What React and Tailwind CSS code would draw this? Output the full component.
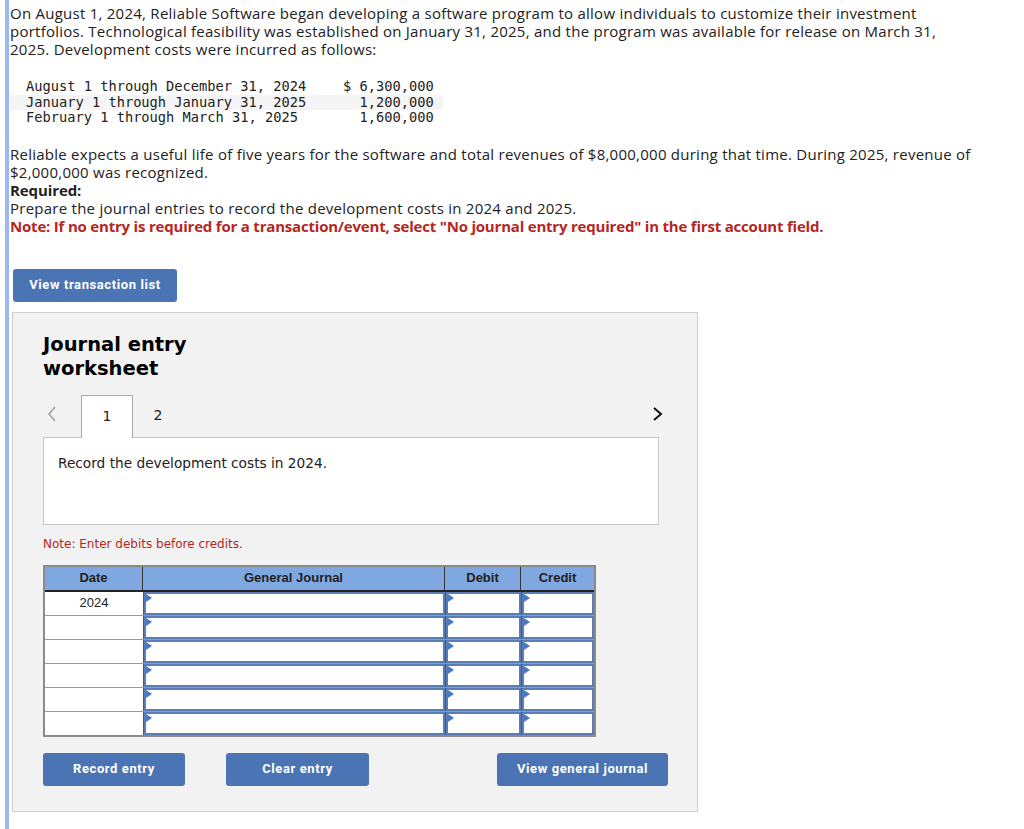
import React from 'react';

const body = { fontFamily: '"Open Sans", Lato, sans-serif' };
const mono = { fontFamily: '"DejaVu Sans Mono", monospace' };
const verdana = { fontFamily: '"DejaVu Sans", Verdana, sans-serif' };
const arial = { fontFamily: '"Liberation Sans", Arial, sans-serif' };

const costs = [
  ['August 1 through December 31, 2024', '$ 6,300,000'],
  ['January 1 through January 31, 2025', '  1,200,000'],
  ['February 1 through March 31, 2025', '  1,600,000'],
];

const InputCell = ({ w }) => (
  <div className={`relative ${w} h-[23px] border-l border-[#555] bg-white`}>
    <div className="relative h-full border-2 border-[#5a7db8] bg-white">
      <span className="absolute left-0 top-0 h-0 w-0 border-y-[4px] border-l-[6px] border-y-transparent border-l-[#4a78c2]" />
    </div>
  </div>
);

const BlueButton = ({ children, className = '' }) => (
  <button
    className={`h-[33px] rounded-[3px] bg-[#4a74b4] text-[13px] font-bold tracking-[0.6px] text-white ${className}`}
    style={{ fontFamily: 'Roboto, "Liberation Sans", sans-serif' }}
  >
    {children}
  </button>
);

export default function App() {
  const rows = ['2024', '', '', '', '', ''];

  return (
    <div className="flex min-h-[829px] bg-white text-[#222]">
      <div className="ml-[5px] w-[4px] shrink-0 bg-[#9bb8f3]" />
      <div className="w-[1000px] pl-[1px]">
        <div className="whitespace-nowrap text-[15px] leading-[18px] tracking-[0.25px]" style={body}>
          <p className="pt-[4px]">
            On August 1, 2024, Reliable Software began developing a software program to allow individuals to customize their investment
            <br />
            portfolios. Technological feasibility was established on January 31, 2025, and the program was available for release on March 31,
            <br />
            2025. Development costs were incurred as follows:
          </p>

          <div className="mt-[21px] w-[433px] text-[13.7px] leading-[15.5px] tracking-normal" style={mono}>
            {costs.map(([label, amt], i) => (
              <div key={i} className={`flex whitespace-pre pl-[16px] ${i === 1 ? 'bg-[#f5f5f5]' : ''}`}>
                <span className="w-[317px]">{label}</span>
                <span>{amt}</span>
              </div>
            ))}
          </div>

          <p className="mt-[19px]">
            Reliable expects a useful life of five years for the software and total revenues of $8,000,000 during that time. During 2025, revenue of
            <br />
            $2,000,000 was recognized.
          </p>
          <p className="font-bold tracking-[-0.1px]">Required:</p>
          <p>Prepare the journal entries to record the development costs in 2024 and 2025.</p>
          <p className="font-bold tracking-[-0.2px] text-[#b5261e]">
            Note: If no entry is required for a transaction/event, select "No journal entry required" in the first account field.
          </p>
        </div>

        <BlueButton className="ml-[3px] mt-[34px] w-[164px]">View transaction list</BlueButton>

        <div className="ml-[2px] mt-[10px] w-[686px] border border-[#cfcfcf] bg-[#f2f2f2] pb-[25px] pl-[30px] pr-[29px] pt-[20px]">
          <h2 className="text-[19.5px] font-bold leading-[24px] text-black" style={verdana}>
            Journal entry
            <br />
            worksheet
          </h2>

          <div className="mt-[13px] flex items-end">
            <span className="mb-[15px] ml-[4px] w-[34px]">
              <svg width="10" height="16" viewBox="0 0 10 16" fill="none" stroke="#a0a0a0" strokeWidth="1.5">
                <path d="M8 1 L2 8 L8 15" />
              </svg>
            </span>
            <div className="relative z-10 -mb-px flex h-[43px] w-[52px] items-center justify-center border border-b-0 border-[#aaa] bg-white text-[14px]" style={verdana}>
              1
            </div>
            <div className="flex h-[43px] w-[50px] items-center justify-center text-[14px]" style={verdana}>2</div>
            <span className="mb-[16px] ml-auto mr-[4px]">
              <svg width="12" height="14" viewBox="0 0 12 14" fill="none" stroke="#111" strokeWidth="2">
                <path d="M2 1 L9 7 L2 13" />
              </svg>
            </span>
          </div>

          <div className="h-[88px] w-[616px] border border-[#c8c8c8] bg-white px-[14px] pt-[15px] text-[13.7px] text-[#222]" style={verdana}>
            Record the development costs in 2024.
          </div>

          <p className="mt-[10px] text-[12px] text-[#b5261e]" style={verdana}>Note: Enter debits before credits.</p>

          <div className="mt-[12px] w-[553px] border-2 border-[#8a8a8a] text-[13px]" style={arial}>
            <div className="flex h-[25px] border-b-2 border-[#222] bg-[#80a8e0] font-bold">
              <div className="flex w-[98px] items-center justify-center border-r border-[#333]">Date</div>
              <div className="flex w-[302px] items-center justify-center border-r border-[#333]">General Journal</div>
              <div className="flex w-[76px] items-center justify-center border-r border-[#333]">Debit</div>
              <div className="flex flex-1 items-center justify-center">Credit</div>
            </div>
            {rows.map((d, i) => (
              <div key={i} className={`flex ${i < rows.length - 1 ? 'border-b border-[#999]' : ''}`}>
                <div className="flex h-[23px] w-[98px] items-center justify-center bg-white text-[13px] text-[#222]">{d}</div>
                <InputCell w="w-[302px]" />
                <InputCell w="w-[76px]" />
                <InputCell w="flex-1" />
              </div>
            ))}
          </div>

          <div className="mt-[16px] flex items-center">
            <BlueButton className="w-[142px]">Record entry</BlueButton>
            <BlueButton className="ml-[41px] w-[143px]">Clear entry</BlueButton>
            <BlueButton className="ml-auto w-[171px]">View general journal</BlueButton>
          </div>
        </div>
      </div>
    </div>
  );
}
